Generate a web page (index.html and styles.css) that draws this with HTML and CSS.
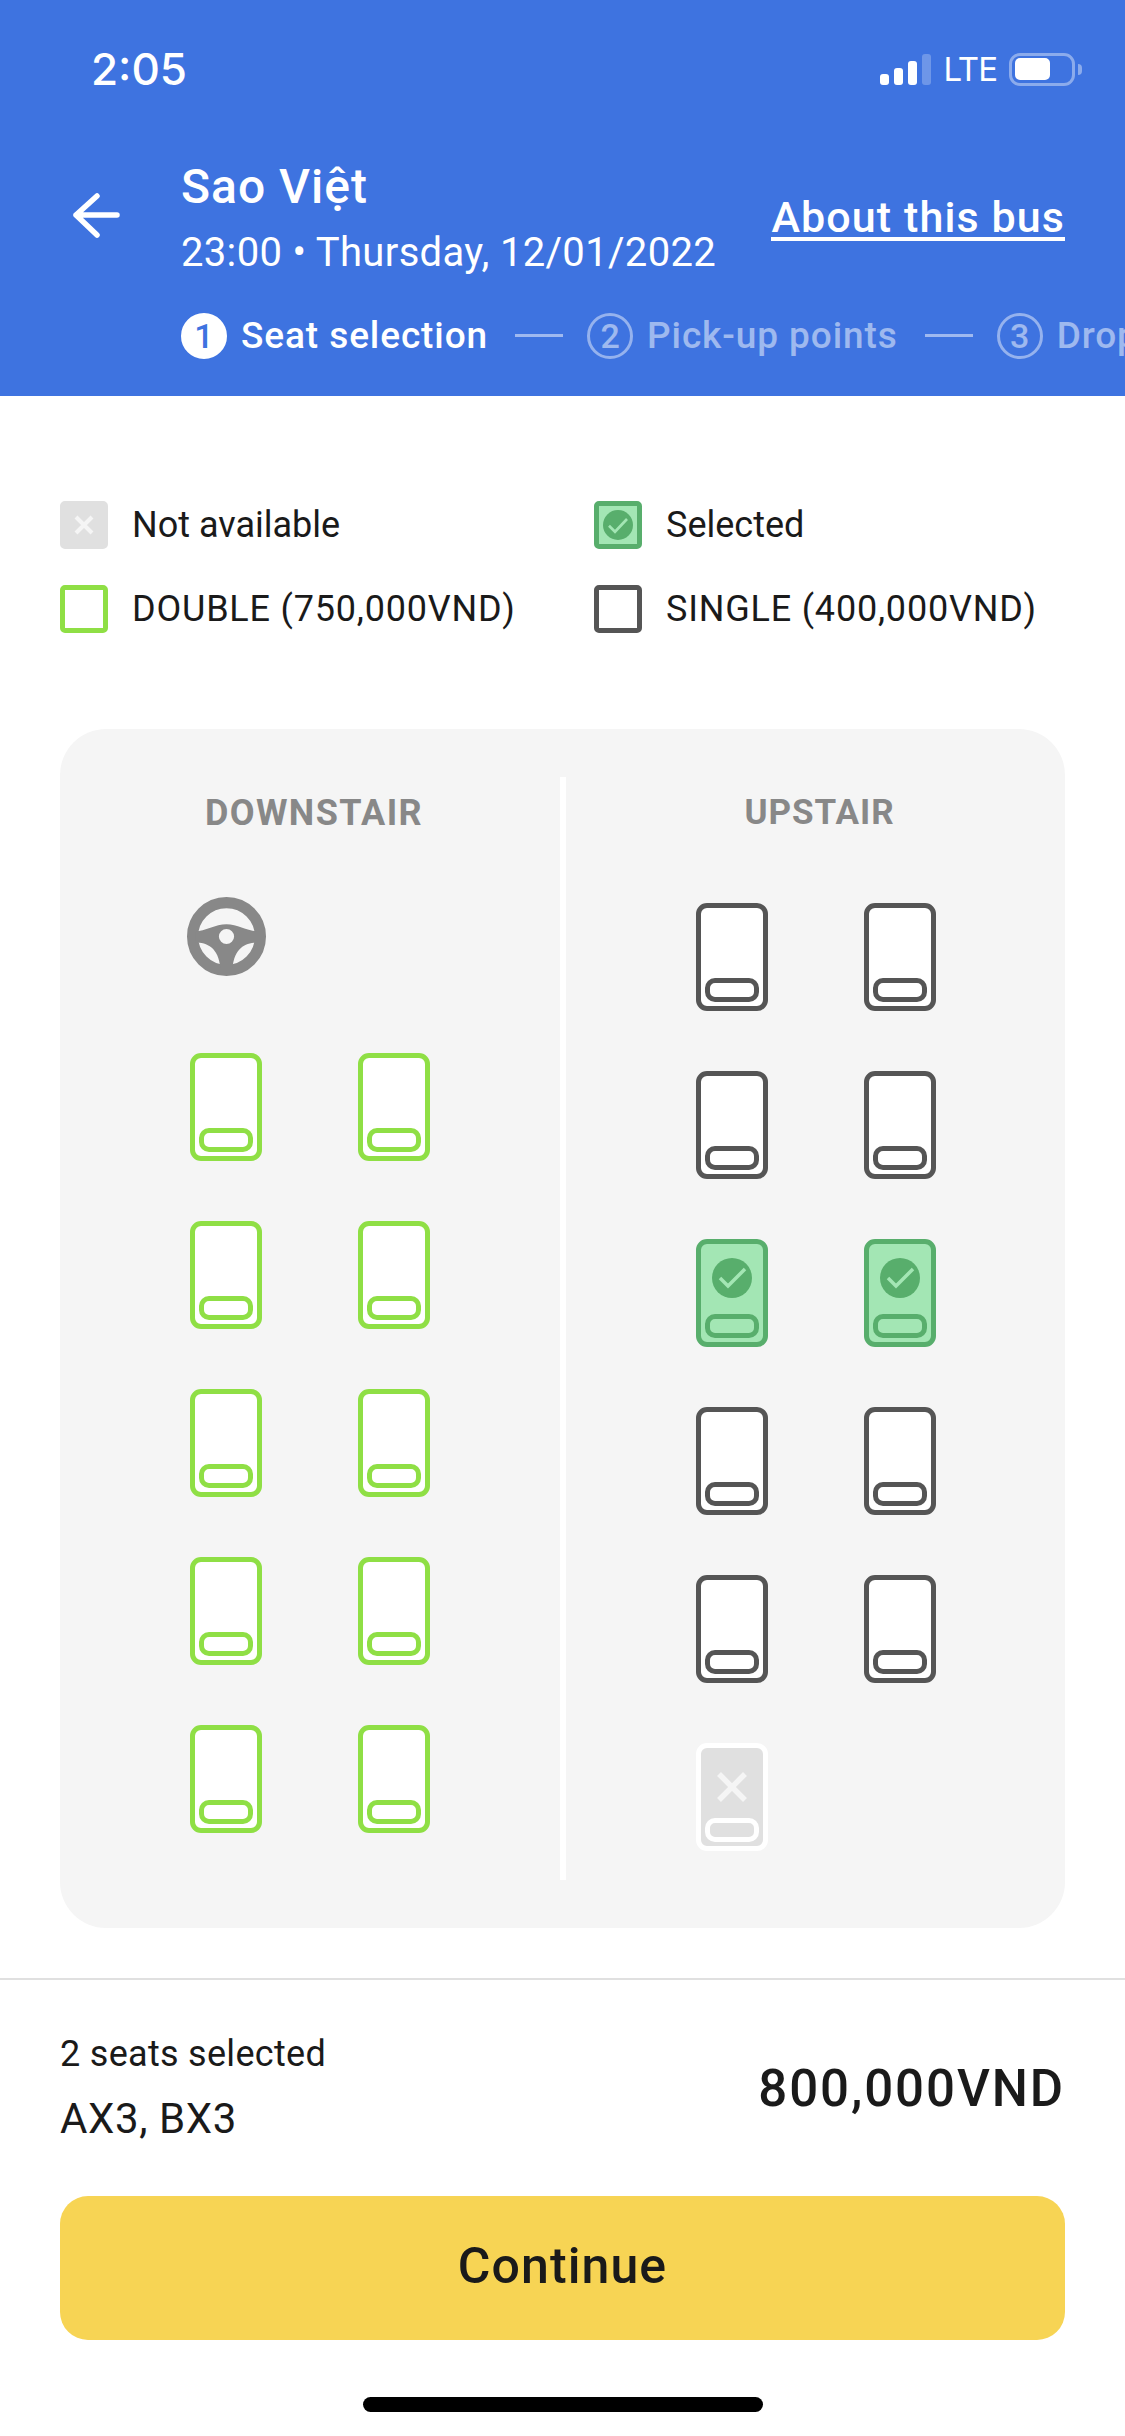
FILE: index.html

```html
<!DOCTYPE html>
<html>
<head>
    <meta charset="utf-8">
    <link rel="stylesheet" href="styles.css">
</head>
<body>
    <div id="header">
        <div id="status-bar">
            <span id="clock">2:05</span>
            <div id="status-icons">
                <div id="signal">
                    <span class="bar bar-1"></span>
                    <span class="bar bar-2"></span>
                    <span class="bar bar-3"></span>
                    <span class="bar bar-4"></span>
                </div>
                <span id="network">LTE</span>
                <div id="battery"><span id="battery-level"></span></div>
                <span id="battery-cap"></span>
            </div>
        </div>
        <div id="trip-row">
            <svg id="back-arrow" width="47" height="46" viewBox="0 0 47 46">
                <path d="M24 4 L3 23 L24 43 M3 23 H44" fill="none" stroke="#fff" stroke-width="5.5" stroke-linecap="round" stroke-linejoin="round"/>
            </svg>
            <div id="trip-info">
                <div id="trip-name">Sao Việt</div>
                <div id="trip-date">23:00 • Thursday, 12/01/2022</div>
            </div>
            <a id="about-link">About this bus</a>
        </div>
        <div id="steps">
            <span class="step-number step-number-active">1</span>
            <span class="step-label step-label-active">Seat selection</span>
            <span class="step-dash"></span>
            <span class="step-number">2</span>
            <span class="step-label">Pick-up points</span>
            <span class="step-dash"></span>
            <span class="step-number">3</span>
            <span class="step-label">Drop-off points</span>
        </div>
    </div>

    <div id="legend">
        <div class="legend-item">
            <span class="legend-box box-disabled">
                <svg width="22" height="22" viewBox="0 0 22 22"><path d="M3 3 L19 19 M19 3 L3 19" stroke="#f5f5f5" stroke-width="4"/></svg>
            </span>
            Not available
        </div>
        <div class="legend-item">
            <span class="legend-box box-selected">
                <svg width="30" height="30" viewBox="0 0 40 40"><circle cx="20" cy="20" r="20" fill="#58ae6c"/><path d="M8 21 L16 29 L32 12" fill="none" stroke="#a3e6b4" stroke-width="3.5"/></svg>
            </span>
            Selected
        </div>
        <div class="legend-item legend-item-caps">
            <span class="legend-box box-double"></span>
            DOUBLE (750,000VND)
        </div>
        <div class="legend-item legend-item-caps">
            <span class="legend-box box-single"></span>
            SINGLE (400,000VND)
        </div>
    </div>

    <div id="deck-panel">
        <div class="deck">
            <div class="deck-title deck-title-wide">DOWNSTAIR</div>
            <div id="wheel-row">
                <svg width="79" height="79" viewBox="0 0 78 78">
                    <circle cx="39" cy="39" r="33.5" fill="none" stroke="#888" stroke-width="11"/>
                    <path fill="#888" fill-rule="evenodd" d="M8 34 C18 34 28 27 39 27 C50 27 60 34 70 34 L70 45 C58 45 47 50 45 70 L33 70 C31 50 20 45 8 45 Z M39 31.5 A7.5 7.5 0 1 0 39 46.5 A7.5 7.5 0 1 0 39 31.5 Z"/>
                </svg>
            </div>
            <div class="seat-grid">
                <div class="seat seat-double"><span class="pillow"></span></div>
                <div class="seat seat-double"><span class="pillow"></span></div>
                <div class="seat seat-double"><span class="pillow"></span></div>
                <div class="seat seat-double"><span class="pillow"></span></div>
                <div class="seat seat-double"><span class="pillow"></span></div>
                <div class="seat seat-double"><span class="pillow"></span></div>
                <div class="seat seat-double"><span class="pillow"></span></div>
                <div class="seat seat-double"><span class="pillow"></span></div>
                <div class="seat seat-double"><span class="pillow"></span></div>
                <div class="seat seat-double"><span class="pillow"></span></div>
            </div>
        </div>
        <div id="deck-divider"></div>
        <div class="deck">
            <div class="deck-title">UPSTAIR</div>
            <div class="seat-grid seat-grid-upstair">
                <div class="seat seat-single"><span class="pillow"></span></div>
                <div class="seat seat-single"><span class="pillow"></span></div>
                <div class="seat seat-single"><span class="pillow"></span></div>
                <div class="seat seat-single"><span class="pillow"></span></div>
                <div class="seat seat-selected">
                    <svg class="seat-mark" width="40" height="40" viewBox="0 0 40 40"><circle cx="20" cy="20" r="20" fill="#58ae6c"/><path d="M8 20 L16 28 L33 11" fill="none" stroke="#a3e6b4" stroke-width="3.5"/></svg>
                    <span class="pillow"></span>
                </div>
                <div class="seat seat-selected">
                    <svg class="seat-mark" width="40" height="40" viewBox="0 0 40 40"><circle cx="20" cy="20" r="20" fill="#58ae6c"/><path d="M8 20 L16 28 L33 11" fill="none" stroke="#a3e6b4" stroke-width="3.5"/></svg>
                    <span class="pillow"></span>
                </div>
                <div class="seat seat-single"><span class="pillow"></span></div>
                <div class="seat seat-single"><span class="pillow"></span></div>
                <div class="seat seat-single"><span class="pillow"></span></div>
                <div class="seat seat-single"><span class="pillow"></span></div>
                <div class="seat seat-disabled">
                    <svg class="seat-mark seat-mark-x" width="30" height="30" viewBox="0 0 30 30"><path d="M2 2 L28 28 M28 2 L2 28" stroke="#f5f5f5" stroke-width="5.5"/></svg>
                    <span class="pillow"></span>
                </div>
            </div>
        </div>
    </div>

    <div id="footer">
        <div id="summary">
            <div id="seat-summary">
                <div id="seat-count">2 seats selected</div>
                <div id="seat-names">AX3, BX3</div>
            </div>
            <div id="total-price">800,000VND</div>
        </div>
        <button id="continue-button">Continue</button>
        <div id="home-bar"></div>
    </div>
</body>
</html>
```

FILE: styles.css

```css
body {
    margin: 0;
    width: 1125px;
    height: 2436px;
    overflow: hidden;
    background-color: #fff;
    color: #1a1a1a;
    font-family: Roboto, "Noto Sans", sans-serif;
}

/* header */
#header {
    height: 396px;
    box-sizing: border-box;
    padding-top: 44px;
    background-color: #3e73e0;
    color: #fff;
    overflow: hidden;
}
#status-bar {
    display: flex;
    justify-content: space-between;
    align-items: center;
    height: 50px;
    padding: 0 43px 0 91px;
}
#clock {
    font-family: Inter, sans-serif;
    font-size: 44px;
    font-weight: 500;
}
#status-icons {
    display: flex;
    align-items: center;
}
#signal {
    display: flex;
    align-items: flex-end;
    gap: 5px;
    height: 31px;
}
.bar {
    width: 9px;
    border-radius: 3px;
    background-color: #fff;
}
.bar-1 { height: 11px; }
.bar-2 { height: 17px; }
.bar-3 { height: 24px; }
.bar-4 { height: 31px; background-color: rgba(255, 255, 255, 0.25); }
#network {
    margin-left: 12px;
    font-family: Inter, sans-serif;
    font-size: 33px;
    font-weight: 400;
    letter-spacing: -1px;
}
#battery {
    display: flex;
    align-items: center;
    box-sizing: border-box;
    width: 66px;
    height: 33px;
    margin-left: 12px;
    padding-left: 3px;
    border: 3px solid rgba(255, 255, 255, 0.4);
    border-radius: 11px;
}
#battery-level {
    width: 35px;
    height: 22px;
    border-radius: 5px;
    background-color: #fff;
}
#battery-cap {
    width: 4px;
    height: 11px;
    margin-left: 3px;
    border-radius: 0 4px 4px 0;
    background-color: rgba(255, 255, 255, 0.4);
}
#trip-row {
    display: flex;
    align-items: center;
    height: 122px;
    margin-top: 63px;
    padding: 0 60px 0 73px;
}
#back-arrow {
    margin: -6px 61px 0 0;
}
#trip-info {
    flex: 1;
    padding-top: 3px;
}
#trip-name {
    font-size: 48px;
    font-weight: 500;
    line-height: 56px;
    letter-spacing: 1px;
}
#trip-date {
    margin-top: 10px;
    font-size: 40px;
    line-height: 56px;
    letter-spacing: 0.33px;
}
#about-link {
    margin-top: 2px;
    border-bottom: 4px solid #fff;
    font-size: 43px;
    font-weight: 500;
    line-height: 40px;
    letter-spacing: 1.1px;
}
#steps {
    display: flex;
    align-items: center;
    height: 47px;
    margin-top: 33px;
    padding-left: 181px;
    white-space: nowrap;
    font-size: 37px;
    font-weight: 500;
    letter-spacing: 0.9px;
}
.step-number {
    flex: none;
    display: flex;
    align-items: center;
    justify-content: center;
    box-sizing: border-box;
    width: 46px;
    height: 46px;
    border: 3px solid rgba(255, 255, 255, 0.45);
    border-radius: 50%;
    color: rgba(255, 255, 255, 0.5);
    font-size: 34px;
    letter-spacing: 0;
}
.step-number-active {
    border-color: #fff;
    background-color: #fff;
    color: #3e73e0;
}
.step-label {
    margin-left: 14px;
    color: rgba(255, 255, 255, 0.5);
}
.step-label-active {
    color: #fff;
}
.step-dash {
    flex: none;
    width: 48px;
    height: 3px;
    margin: 0 24px 0 27px;
    background-color: rgba(255, 255, 255, 0.5);
}

/* legend */
#legend {
    display: grid;
    grid-template-columns: 534px 1fr;
    row-gap: 36px;
    margin-top: 105px;
    padding: 0 60px;
}
.legend-item {
    display: flex;
    align-items: center;
    gap: 24px;
    height: 48px;
    font-size: 36px;
    white-space: nowrap;
}
.legend-item-caps {
    letter-spacing: 0.8px;
}
.legend-box {
    display: flex;
    align-items: center;
    justify-content: center;
    box-sizing: border-box;
    width: 48px;
    height: 48px;
    border: 5px solid;
    border-radius: 5px;
}
.box-disabled { border-color: #e0e0e0; background-color: #e0e0e0; }
.box-selected { border-color: #58ae6c; background-color: #a3e6b4; }
.box-double { border-color: #8fdf45; }
.box-single { border-color: #555; }

/* seat map */
#deck-panel {
    display: grid;
    grid-template-columns: 500px 6px 1fr;
    box-sizing: border-box;
    height: 1199px;
    margin: 96px 60px 0;
    padding: 48px 0;
    border-radius: 46px;
    background-color: #f5f5f5;
}
#deck-divider {
    background-color: #fff;
}
.deck-title {
    margin-top: 16px;
    padding-left: 8px;
    color: #888;
    font-size: 35px;
    font-weight: 700;
    line-height: 40px;
    letter-spacing: 1px;
    text-align: center;
}
.deck-title-wide {
    font-size: 36px;
    letter-spacing: 1.4px;
}
#wheel-row {
    width: 240px;
    height: 79px;
    margin: 64px auto 77px;
}
#wheel-row svg {
    display: block;
    margin-left: -3px;
}
.seat-grid {
    display: grid;
    grid-template-columns: 72px 72px;
    gap: 60px 96px;
    justify-content: center;
}
.seat-grid-upstair {
    margin: 70px 0 0 1px;
}
.seat {
    display: flex;
    flex-direction: column;
    align-items: center;
    box-sizing: border-box;
    width: 72px;
    height: 108px;
    padding-bottom: 4px;
    border: 5px solid;
    border-radius: 11px;
}
.pillow {
    box-sizing: border-box;
    width: 54px;
    height: 24px;
    margin-top: auto;
    border: 5px solid;
    border-color: inherit;
    border-radius: 10px;
}
.seat-double { border-color: #8fdf45; background-color: #fff; }
.seat-single { border-color: #555; background-color: #fff; }
.seat-selected { border-color: #58ae6c; background-color: #a3e6b4; }
.seat-disabled { border-color: #fff; background-color: #e0e0e0; }
.seat-mark {
    flex: none;
    margin-top: 14px;
}
.seat-mark-x {
    margin-top: 24px;
}

/* footer */
#footer {
    margin-top: 50px;
    padding: 0 60px;
    border-top: 2px solid #e0e0e0;
}
#summary {
    display: flex;
    justify-content: space-between;
    align-items: center;
    height: 216px;
}
#seat-summary {
    margin-top: -3px;
}
#seat-count {
    font-size: 36px;
    line-height: 44px;
    letter-spacing: 0.3px;
}
#seat-names {
    margin-top: 21px;
    font-size: 42px;
    line-height: 44px;
    letter-spacing: 0.6px;
}
#total-price {
    font-size: 51px;
    font-weight: 500;
    letter-spacing: 1.9px;
}
#continue-button {
    display: block;
    width: 100%;
    height: 144px;
    padding-bottom: 6px;
    border: none;
    border-radius: 28px;
    background-color: #f7d454;
    color: #1a1a1a;
    font-family: inherit;
    font-size: 50px;
    font-weight: 500;
    letter-spacing: 1.1px;
}
#home-bar {
    width: 400px;
    height: 15px;
    margin: 57px auto 0;
    border-radius: 8px;
    background-color: #000;
}
```
